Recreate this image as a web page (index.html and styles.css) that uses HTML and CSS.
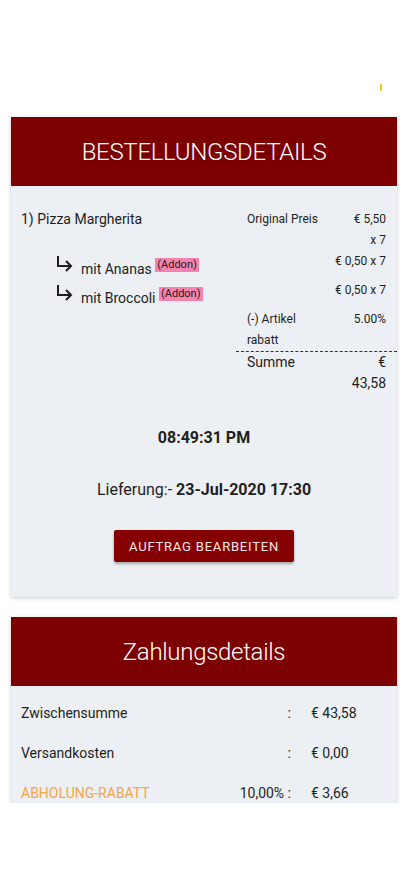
FILE: index.html
```html
<!DOCTYPE html>
<html lang="de">
<head>
    <meta charset="UTF-8">
    <meta name="viewport" content="width=device-width, initial-scale=1.0">
    <title>Bestellungsdetails</title>
    <link rel="stylesheet" href="styles.css">
</head>
<body>
    <div class="topbar">
        <span class="status-mark"></span>
    </div>

    <!-- Bestellung -->
    <div class="card">
        <div class="card-header">BESTELLUNGSDETAILS</div>
        <div class="card-body order-body">
            <div class="order-item">
                <div class="item-left">
                    <div class="item-name">1) Pizza Margherita</div>
                    <div class="addons">
                        <div class="addon">
                            <svg class="addon-arrow" width="17" height="17" viewBox="0 0 17 17">
                                <path d="M2 1 V11 H15 M10 6 L15 11 L10 16" fill="none" stroke="#1d1d1f" stroke-width="2"/>
                            </svg>
                            <span class="addon-text">mit Ananas <span class="badge">(Addon)</span></span>
                        </div>
                        <div class="addon">
                            <svg class="addon-arrow" width="17" height="17" viewBox="0 0 17 17">
                                <path d="M2 1 V11 H15 M10 6 L15 11 L10 16" fill="none" stroke="#1d1d1f" stroke-width="2"/>
                            </svg>
                            <span class="addon-text">mit Broccoli <span class="badge">(Addon)</span></span>
                        </div>
                    </div>
                </div>

                <div class="item-right">
                    <div class="price-row first">
                        <span class="price-label">Original Preis</span>
                        <span class="price-value">€ 5,50 x 7</span>
                    </div>
                    <div class="price-row addon-price">
                        <span class="price-value full">€ 0,50 x 7</span>
                    </div>
                    <div class="price-row addon-price">
                        <span class="price-value full">€ 0,50 x 7</span>
                    </div>
                    <div class="price-row discount">
                        <span class="price-label">(-) Artikel rabatt</span>
                        <span class="price-value">5.00%</span>
                    </div>
                    <div class="price-row total">
                        <span class="price-label">Summe</span>
                        <span class="price-value">€ 43,58</span>
                    </div>
                </div>
            </div>

            <div class="order-time">08:49:31 PM</div>
            <div class="delivery">Lieferung:- <b>23-Jul-2020 17:30</b></div>

            <div class="button-wrap">
                <button class="edit-button">AUFTRAG BEARBEITEN</button>
            </div>
        </div>
    </div>

    <!-- Zahlung -->
    <div class="card payment-card">
        <div class="card-header">Zahlungsdetails</div>
        <div class="card-body payment-body">
            <div class="pay-row">
                <span class="pay-label">Zwischensumme</span>
                <span class="pay-colon">:</span>
                <span class="pay-value">€ 43,58</span>
            </div>
            <div class="pay-row">
                <span class="pay-label">Versandkosten</span>
                <span class="pay-colon">:</span>
                <span class="pay-value">€ 0,00</span>
            </div>
            <div class="pay-row">
                <span class="pay-label highlight">ABHOLUNG-RABATT</span>
                <span class="pay-colon">10,00% :</span>
                <span class="pay-value">€ 3,66</span>
            </div>
        </div>
    </div>
</body>
</html>
```

FILE: styles.css
```css
body {
    margin: 0;
    font-family: Roboto, "Liberation Sans", sans-serif;
    color: #1f1f21;
    background-color: #ffffff;
}

.topbar {
    height: 117px;
    display: flex;
    justify-content: flex-end;
    align-items: flex-start;
    padding-right: 26px;
    box-sizing: border-box;
    padding-top: 84px;
}

.status-mark {
    width: 2px;
    height: 7px;
    background: #f6c824;
}

.card {
    margin: 0 11px;
    box-shadow: 0 1px 4px rgba(0,0,0,0.22);
}

.payment-card {
    margin-top: 20px;
}

.card-header {
    height: 69px;
    background: #7d0000;
    color: #ffffff;
    font-size: 24px;
    font-weight: 300;
    letter-spacing: -0.3px;
    display: flex;
    align-items: center;
    justify-content: center;
}

.card-body {
    background: #eceff3;
}

.order-body {
    padding: 23px 0 35px;
}

.order-item {
    display: flex;
}

.item-left {
    flex: 1;
    padding-left: 10px;
}

.item-name {
    font-size: 14px;
    line-height: 21px;
}

.addons {
    margin-top: 21px;
    padding-left: 35px;
}

.addon {
    height: 29px;
    display: flex;
    align-items: flex-start;
}

.addon-arrow {
    margin-top: 4px;
    flex-shrink: 0;
}

.addon-text {
    margin-left: 8px;
    margin-top: 8px;
    font-size: 14px;
    line-height: 21px;
}

.badge {
    display: inline-block;
    vertical-align: top;
    font-size: 11px;
    line-height: 14px;
    padding: 0 2px;
    margin-top: -1px;
    background: #f484ae;
    color: #2a1a20;
}

.item-right {
    width: 161px;
}

.price-row {
    display: grid;
    grid-template-columns: 82px 1fr;
    padding: 0 11px;
    font-size: 12px;
    line-height: 21px;
}

.price-value {
    text-align: right;
    padding-left: 16px;
}

.price-value.full {
    grid-column: 1 / -1;
}

.first {
    height: 42px;
}

.addon-price {
    height: 29px;
}

.discount {
    border-bottom: 1px dashed #333;
}

.total {
    font-size: 14px;
}

.order-time {
    margin-top: 33px;
    text-align: center;
    font-size: 16px;
    font-weight: bold;
    line-height: 21px;
}

.delivery {
    margin-top: 31px;
    text-align: center;
    font-size: 16px;
    line-height: 21px;
}

.button-wrap {
    margin-top: 30px;
    text-align: center;
}

.edit-button {
    width: 180px;
    height: 32px;
    border: none;
    border-radius: 2px;
    background: #850000;
    color: #f5e8e8;
    font-family: Roboto, "Liberation Sans", sans-serif;
    font-size: 13px;
    font-weight: 400;
    letter-spacing: 0.8px;
    box-shadow: 0 2px 3px rgba(0,0,0,0.3);
}

.payment-body {
    height: 117px;
    overflow: hidden;
    padding-top: 7px;
    box-sizing: border-box;
}

.pay-row {
    height: 40px;
    display: grid;
    grid-template-columns: 1fr auto 75px;
    column-gap: 20px;
    align-items: center;
    padding: 0 11px 0 10px;
    font-size: 14px;
}

.pay-colon {
    text-align: right;
}

.highlight {
    color: #f4a54a;
}
```
